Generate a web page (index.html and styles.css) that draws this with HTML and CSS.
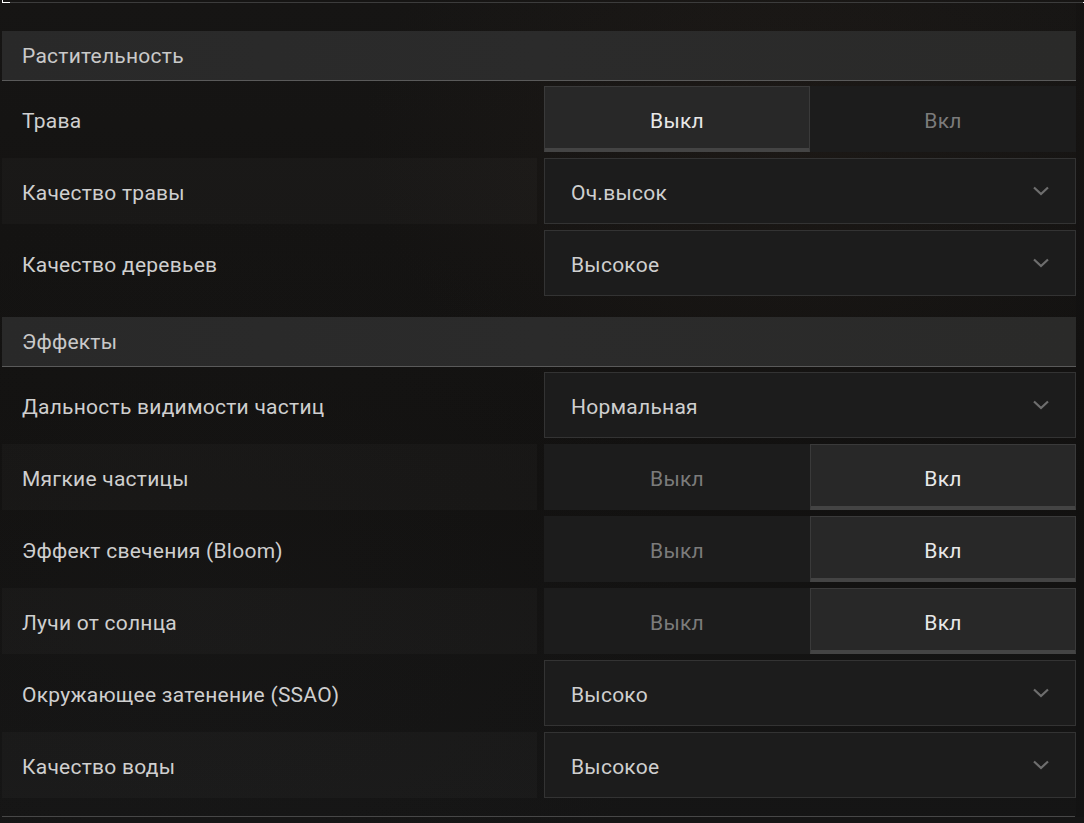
FILE: index.html
```html
<!DOCTYPE html>
<html lang="ru">
<head>
  <meta charset="UTF-8">
  <meta name="viewport" content="width=device-width, initial-scale=1">
  <title>Графика</title>
  <link rel="stylesheet" href="styles.css">
</head>
<body>
  <div class="topline">
    <span class="corner"></span>
    <span class="rule"></span>
    <span class="dot"></span>
  </div>

  <div class="frame">
    <div class="panel">
      <section class="group">
        <div class="group-head">Растительность</div>
        <div class="rows">
          <div class="row">
            <div class="label">Трава</div>
            <div class="toggle">
              <button class="selected">Выкл</button>
              <button>Вкл</button>
            </div>
          </div>
          <div class="row">
            <div class="label">Качество травы</div>
            <div class="select">
              <span>Оч.высок</span>
              <svg class="chev" width="16" height="10" viewBox="0 0 16 10"><path d="M1 1.5 L8 8 L15 1.5" /></svg>
            </div>
          </div>
          <div class="row">
            <div class="label">Качество деревьев</div>
            <div class="select">
              <span>Высокое</span>
              <svg class="chev" width="16" height="10" viewBox="0 0 16 10"><path d="M1 1.5 L8 8 L15 1.5" /></svg>
            </div>
          </div>
        </div>
      </section>

      <section class="group">
        <div class="group-head">Эффекты</div>
        <div class="rows">
          <div class="row">
            <div class="label">Дальность видимости частиц</div>
            <div class="select">
              <span>Нормальная</span>
              <svg class="chev" width="16" height="10" viewBox="0 0 16 10"><path d="M1 1.5 L8 8 L15 1.5" /></svg>
            </div>
          </div>
          <div class="row">
            <div class="label">Мягкие частицы</div>
            <div class="toggle">
              <button>Выкл</button>
              <button class="selected">Вкл</button>
            </div>
          </div>
          <div class="row">
            <div class="label">Эффект свечения (Bloom)</div>
            <div class="toggle">
              <button>Выкл</button>
              <button class="selected">Вкл</button>
            </div>
          </div>
          <div class="row">
            <div class="label">Лучи от солнца</div>
            <div class="toggle">
              <button>Выкл</button>
              <button class="selected">Вкл</button>
            </div>
          </div>
          <div class="row">
            <div class="label">Окружающее затенение (SSAO)</div>
            <div class="select">
              <span>Высоко</span>
              <svg class="chev" width="16" height="10" viewBox="0 0 16 10"><path d="M1 1.5 L8 8 L15 1.5" /></svg>
            </div>
          </div>
          <div class="row">
            <div class="label">Качество воды</div>
            <div class="select">
              <span>Высокое</span>
              <svg class="chev" width="16" height="10" viewBox="0 0 16 10"><path d="M1 1.5 L8 8 L15 1.5" /></svg>
            </div>
          </div>
        </div>
      </section>

      <div class="endline"></div>
    </div>
    <div class="scroll"></div>
  </div>
</body>
</html>
```

FILE: styles.css
```css
html, body {
  margin: 0;
  height: 100%;
}
body {
  font-family: Roboto, "Noto Sans", sans-serif;
  font-size: 21px;
  letter-spacing: 0.25px;
  color: #cccccc;
  background-color: #131211;
  background-image:
    radial-gradient(ellipse 420px 300px at 780px 140px, rgba(60, 45, 35, 0.18), transparent),
    radial-gradient(ellipse 500px 400px at 200px 600px, rgba(40, 40, 40, 0.12), transparent),
    linear-gradient(180deg, #161514 0%, #121110 60%, #151515 100%);
  overflow: hidden;
}
.topline {
  display: flex;
  align-items: flex-end;
  height: 3px;
}
.corner {
  width: 8px;
  height: 3px;
  margin-left: 2px;
  border-left: 1px solid #fff;
  border-bottom: 1px solid #fff;
  box-sizing: border-box;
}
.rule {
  flex: 1;
  height: 1px;
  background-color: #3c3c3c;
}
.dot {
  width: 1px;
  height: 1px;
  background-color: #fff;
}
.frame {
  display: flex;
}
.panel {
  width: 1074px;
  margin-left: 2px;
  padding-top: 28px;
}
.scroll {
  flex: 1;
  background-color: rgba(0, 0, 0, 0.05);
}
.group {
  margin-bottom: 21px;
}
.group-head {
  height: 47px;
  padding-top: 2px;
  line-height: 47px;
  padding-left: 20px;
  background: linear-gradient(90deg, #292929 0%, #2b2b2b 50%, #2a2a29 100%);
  border-bottom: 1px solid #5a5a5a;
  color: #c9c9c9;
  margin-bottom: 5px;
}
.rows {
  display: flex;
  flex-direction: column;
  gap: 6px;
}
.row {
  display: grid;
  grid-template-columns: 535px 1fr;
  column-gap: 7px;
  height: 66px;
}
.rows .row:nth-child(even) .label {
  background-color: rgba(255, 255, 255, 0.025);
}
.label {
  display: flex;
  align-items: center;
  padding: 3px 0 0 20px;
  color: #cfcfcf;
}
.toggle {
  display: grid;
  grid-template-columns: 1fr 1fr;
  background-color: #1c1c1c;
}
.toggle button {
  font-family: inherit;
  font-size: 21px;
  letter-spacing: 0.25px;
  color: #7b7b7b;
  background: none;
  border: none;
  padding: 4px 0 0 0;
  margin: 0;
}
.toggle button.selected {
  color: #e8e8e8;
  background-color: #282828;
  border: 1px solid #3a3a3a;
  border-bottom: 4px solid #444;
  padding-top: 7px;
}
.select {
  display: flex;
  align-items: center;
  justify-content: space-between;
  padding: 3px 26px 0 26px;
  background-color: #1c1c1c;
  border: 1px solid #333;
  color: #cfcfcf;
}
.select .chev {
  margin-top: -3px;
}
.chev path {
  fill: none;
  stroke: #6e6e6e;
  stroke-width: 2.2;
}
.endline {
  height: 1px;
  margin-top: -3px;
  width: 1073px;
  background-color: #474747;
}
```
